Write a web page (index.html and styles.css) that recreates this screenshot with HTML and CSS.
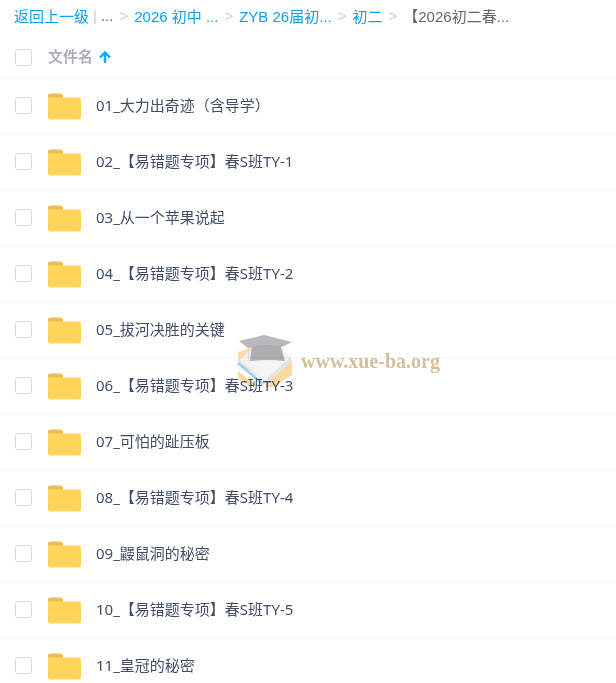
FILE: index.html
```
<!DOCTYPE html>
<html lang="zh">
<head>
    <meta charset="UTF-8">
    <meta name="viewport" content="width=device-width, initial-scale=1.0">
    <title>文件列表</title>
    <link rel="stylesheet" href="styles.css">
</head>
<body>
    <svg class="sprite" width="0" height="0" aria-hidden="true">
        <symbol id="folder" viewBox="0 0 34 28">
            <path d="M1 8V3.5q0-2 2-2h10q3 0 3 3V8z" fill="#e6bf4c"/>
            <path d="M1 5.5h31q2 0 2 2v18q0 2-2 2H3q-2 0-2-2z" fill="#ffd65a"/>
        </symbol>
    </svg>

    <nav class="breadcrumb">
        <a href="#">返回上一级</a>
        <span class="divider">|</span>
        <span class="more">...</span>
        <span class="sep">&gt;</span>
        <a href="#">2026 初中 ...</a>
        <span class="sep">&gt;</span>
        <a href="#">ZYB 26届初...</a>
        <span class="sep">&gt;</span>
        <a href="#">初二</a>
        <span class="sep">&gt;</span>
        <span class="current">【2026初二春...</span>
    </nav>

    <div class="list-header">
        <input type="checkbox" class="check" aria-label="全选">
        <button type="button" class="sort">
            文件名
            <svg width="12" height="14" viewBox="0 0 12 14" aria-hidden="true">
                <path d="M6 14V4M1 8.5L6 3.5 11 8.5" fill="none" stroke="#09aaff" stroke-width="2.4"/>
            </svg>
        </button>
    </div>

    <ul class="file-list">
        <li class="file"><input type="checkbox" class="check" id="f1"><svg class="folder"><use href="#folder"/></svg><label for="f1">01_大力出奇迹（含导学）</label></li>
        <li class="file"><input type="checkbox" class="check" id="f2"><svg class="folder"><use href="#folder"/></svg><label for="f2">02_【易错题专项】春S班TY-1</label></li>
        <li class="file"><input type="checkbox" class="check" id="f3"><svg class="folder"><use href="#folder"/></svg><label for="f3">03_从一个苹果说起</label></li>
        <li class="file"><input type="checkbox" class="check" id="f4"><svg class="folder"><use href="#folder"/></svg><label for="f4">04_【易错题专项】春S班TY-2</label></li>
        <li class="file"><input type="checkbox" class="check" id="f5"><svg class="folder"><use href="#folder"/></svg><label for="f5">05_拔河决胜的关键</label></li>
        <li class="file"><input type="checkbox" class="check" id="f6"><svg class="folder"><use href="#folder"/></svg><label for="f6">06_【易错题专项】春S班TY-3</label></li>
        <li class="file"><input type="checkbox" class="check" id="f7"><svg class="folder"><use href="#folder"/></svg><label for="f7">07_可怕的趾压板</label></li>
        <li class="file"><input type="checkbox" class="check" id="f8"><svg class="folder"><use href="#folder"/></svg><label for="f8">08_【易错题专项】春S班TY-4</label></li>
        <li class="file"><input type="checkbox" class="check" id="f9"><svg class="folder"><use href="#folder"/></svg><label for="f9">09_鼹鼠洞的秘密</label></li>
        <li class="file"><input type="checkbox" class="check" id="f10"><svg class="folder"><use href="#folder"/></svg><label for="f10">10_【易错题专项】春S班TY-5</label></li>
        <li class="file"><input type="checkbox" class="check" id="f11"><svg class="folder"><use href="#folder"/></svg><label for="f11">11_皇冠的秘密</label></li>
    </ul>

    <!-- 水印 -->
    <div class="watermark">
        <svg width="56" height="52" viewBox="0 0 56 52" aria-hidden="true">
            <path d="M1 17L14 12V36L1 30z" fill="#fbdcae"/>
            <path d="M1 36L20 51H12L1 43z" fill="#f9d7a2"/>
            <path d="M30 47L55 25V40L37 52H28z" fill="#fbd9a4"/>
            <path d="M1 28L26 49" fill="none" stroke="#a9d0ea" stroke-width="3"/>
            <path d="M26 49L54 24" fill="none" stroke="#d3e2ed" stroke-width="2"/>
            <path d="M2 26L14 14 45 13 54 22 27 46z" fill="#f4f4f5"/>
            <path d="M3 26L27 46 54 22" fill="none" stroke="#e1e4e7" stroke-width="1"/>
            <path d="M15 9L43 9 48 26Q31 24 13 26z" fill="#adadaf"/>
            <path d="M2 6L27 0 55 7 45 12Q28 9 11 13z" fill="#b9b9bb"/>
            <path d="M13 12Q28 9 44 12" fill="none" stroke="#a8a8aa" stroke-width="1"/>
            <path d="M14 12Q10 18 12 26" fill="none" stroke="#d8d8d8" stroke-width="1"/>
        </svg>
        <span>www.xue-ba.org</span>
    </div>
</body>
</html>
```
FILE: styles.css
```
* {
    box-sizing: border-box;
}

body {
    margin: 0;
    height: 100vh;
    position: relative;
    overflow: hidden;
    background-color: #fff;
    color: #424e67;
    font-family: 'Noto Sans', 'Noto Sans CJK SC', sans-serif;
    font-size: 15px;
}

.sprite {
    position: absolute;
}

.breadcrumb {
    display: flex;
    align-items: center;
    height: 31px;
    padding: 0 14px;
    font-family: 'Liberation Sans', 'Noto Sans CJK SC', sans-serif;
    white-space: nowrap;
}

.breadcrumb a {
    color: #09a0f0;
    text-decoration: none;
}

.breadcrumb .divider {
    margin: 0 4px;
    color: #c4d0dc;
}

.breadcrumb .more {
    color: #666;
}

.breadcrumb .sep {
    margin: 0 6px;
    color: #c4ccd8;
}

.breadcrumb .current {
    color: #666;
}

.list-header {
    display: flex;
    align-items: center;
    gap: 16px;
    height: 47px;
    padding: 6px 15px 0;
    border-bottom: 1px solid #f3f4f6;
}

.check {
    appearance: none;
    flex: none;
    width: 17px;
    height: 17px;
    margin: 0;
    border: 1px solid #d6d9e0;
    border-radius: 3px;
    background-color: #fff;
}

.check:checked {
    background-color: #09aaff;
}

.sort {
    display: flex;
    align-items: center;
    gap: 6px;
    padding: 0 0 3px;
    border: none;
    background: none;
    color: #adb0bc;
    font: inherit;
    font-weight: bold;
    cursor: pointer;
}

.file-list {
    margin: 0;
    padding: 0;
    list-style: none;
}

.file {
    display: flex;
    align-items: center;
    height: 56px;
    padding: 0 15px;
    border-bottom: 1px solid #f3f4f6;
}

.file label {
    padding-bottom: 2px;
}

.folder {
    flex: none;
    width: 34px;
    height: 28px;
    margin: 0 15px;
}

.watermark {
    position: absolute;
    top: 335px;
    left: 237px;
    display: flex;
    align-items: center;
    gap: 8px;
    color: #d3c09c;
    font-family: 'Liberation Serif', serif;
    font-size: 20px;
    font-weight: bold;
    mix-blend-mode: multiply;
    pointer-events: none;
}
```
